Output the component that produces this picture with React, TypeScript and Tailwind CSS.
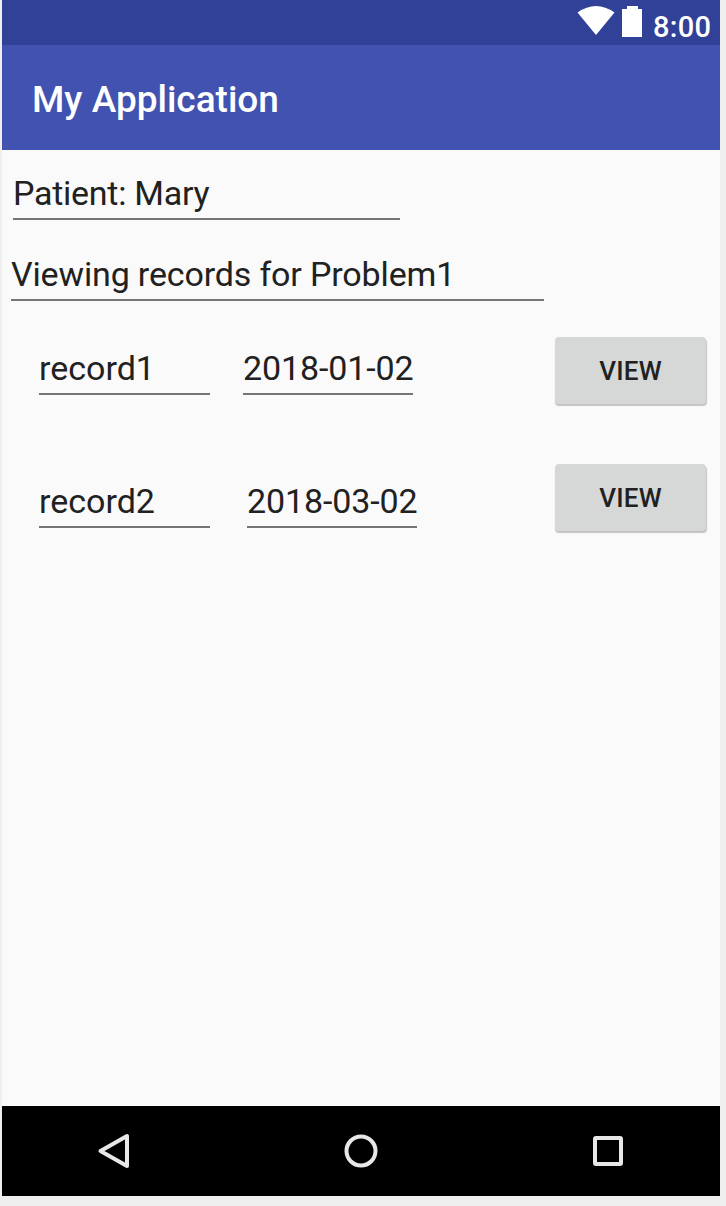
import React from "react";

function Field({ text, className }: { text: string; className: string }) {
  return (
    <div className={`h-[44px] border-b-2 border-[#757575] text-[34px] leading-[34px] whitespace-nowrap ${className}`}>
      {text}
    </div>
  );
}

function ViewButton({ className }: { className: string }) {
  return (
    <button className={`h-[67px] w-[151px] rounded-[4px] bg-[#d6d8d7] text-[26px] font-medium leading-[68px] tracking-[0.2px] shadow-[0.5px_2px_1px_rgba(0,0,0,0.22)] ${className}`}>
      VIEW
    </button>
  );
}

export default function App() {
  return (
    <div className="h-[1206px] w-[726px] bg-[#efefef] pl-[2px] font-['Roboto',sans-serif] text-[#212121]">
      <div className="flex h-[1196px] w-[718px] flex-col bg-[#fafafa]">
        <div className="flex h-[45px] shrink-0 bg-[#314198] pl-[575px] text-white">
          <svg className="mt-[5px] h-[32px] w-[38px] shrink-0" viewBox="0 0 38 32" fill="currentColor">
            <path d="M0.5 7.500Q19 -5.500 37.500 7.500L19 30Z" />
          </svg>
          <svg className="ml-[7px] mt-[6px] h-[31px] w-[20px] shrink-0" viewBox="0 0 20 31" fill="currentColor">
            <path d="M5 0h11v3h4v28H0V3h5Z" />
          </svg>
          <span className="ml-[11px] mt-[10px] text-[29px] font-medium leading-[35px] tracking-[0.3px]">8:00</span>
        </div>
        <header className="h-[105px] shrink-0 bg-[#4152b0] pl-[30px] text-[37px] font-medium leading-[110px] text-white">
          My Application
        </header>
        <main className="flex-1">
          <Field text="Patient: Mary" className="ml-[11px] mt-[26px] w-[387px] tracking-[-0.27px]" />
          <Field text="Viewing records for Problem1" className="ml-[9px] mt-[37px] w-[533px] tracking-[-0.15px]" />
          <div className="mt-[36px] flex h-[68px]">
            <Field text="record1" className="ml-[37px] mt-[14px] w-[171px]" />
            <Field text="2018-01-02" className="ml-[33px] mt-[14px] w-[170px] tracking-[-0.12px]" />
            <ViewButton className="ml-[142px]" />
          </div>
          <div className="mt-[59px] flex h-[68px]">
            <Field text="record2" className="ml-[37px] mt-[20px] w-[171px]" />
            <Field text="2018-03-02" className="ml-[37px] mt-[20px] w-[170px] tracking-[-0.12px]" />
            <ViewButton className="ml-[138px]" />
          </div>
        </main>
        <nav className="flex h-[90px] shrink-0 bg-black text-[#e8e8e8]">
          <svg className="h-[90px] w-[718px]" viewBox="0 0 718 90" fill="none" stroke="currentColor" strokeWidth="4">
            <path d="M98.500 45L125 30V60Z" strokeLinejoin="round" />
            <circle cx="359" cy="45" r="14.500" />
            <rect x="593" y="32" width="26" height="26" rx="1" />
          </svg>
        </nav>
      </div>
    </div>
  );
}
